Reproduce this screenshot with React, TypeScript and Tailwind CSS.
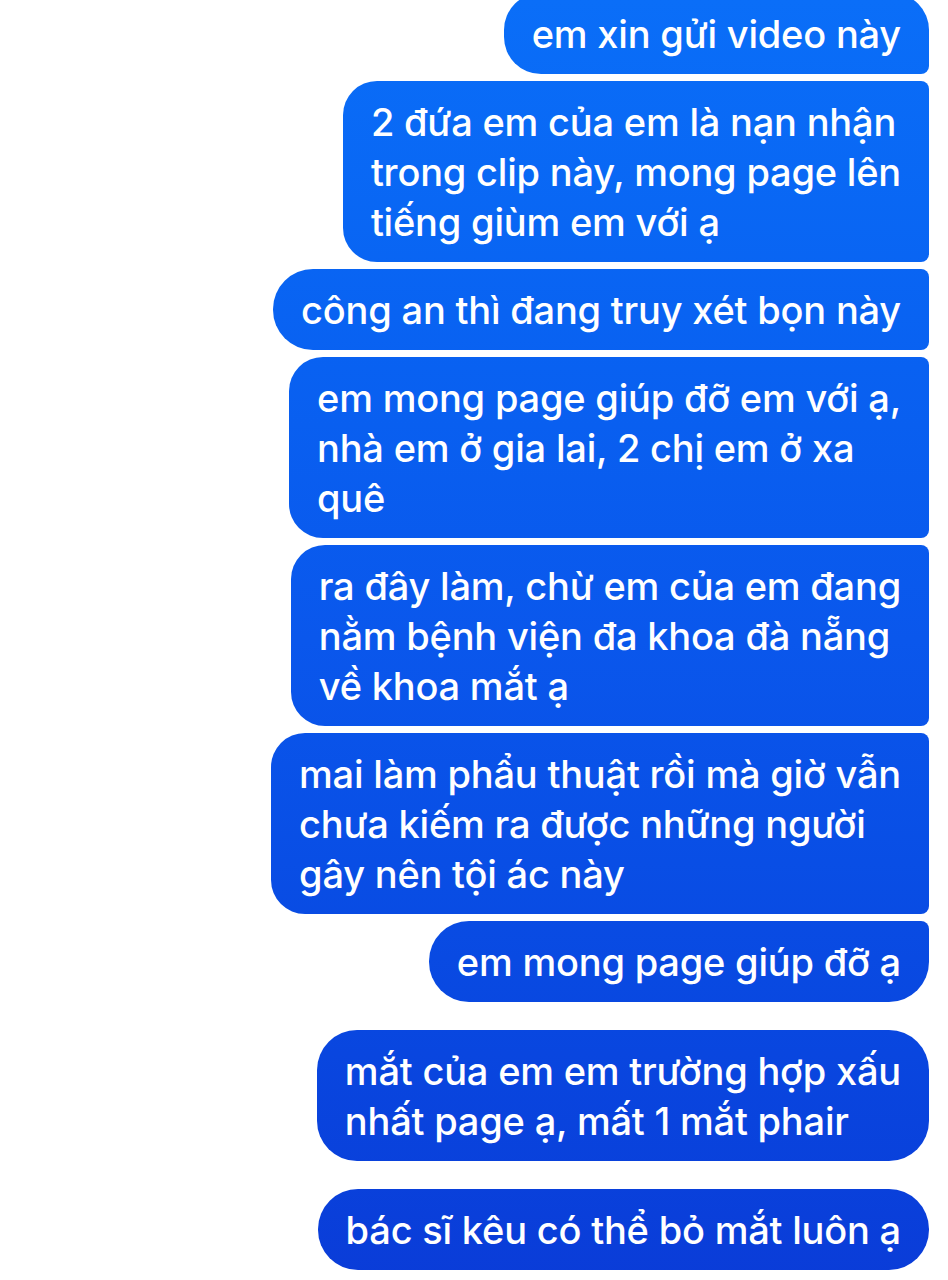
const font = { fontFamily: "Inter, 'Noto Sans', 'Liberation Sans', sans-serif" };

type Msg = {
  lines: string[];
  shape: string;
  gap: string;
};

const messages: Msg[] = [
  { lines: ["em xin gửi video này"], shape: "rounded-l-[37px] rounded-tr-[37px] rounded-br-[8px]", gap: "-mt-[7px]" },
  {
    lines: ["2 đứa em của em là nạn nhận", "trong clip này, mong page lên", "tiếng giùm em với ạ"],
    shape: "rounded-l-[34px] rounded-r-[8px]",
    gap: "mt-[7px]",
  },
  { lines: ["công an thì đang truy xét bọn này"], shape: "rounded-l-[40px] rounded-r-[8px]", gap: "mt-[7px]" },
  {
    lines: ["em mong page giúp đỡ em với ạ,", "nhà em ở gia lai, 2 chị em ở xa", "quê"],
    shape: "rounded-l-[34px] rounded-r-[8px]",
    gap: "mt-[7px]",
  },
  {
    lines: ["ra đây làm, chừ em của em đang", "nằm bệnh viện đa khoa đà nẵng", "về khoa mắt ạ"],
    shape: "rounded-l-[34px] rounded-r-[8px]",
    gap: "mt-[7px]",
  },
  {
    lines: ["mai làm phẩu thuật rồi mà giờ vẫn", "chưa kiếm ra được những người", "gây nên tội ác này"],
    shape: "rounded-l-[34px] rounded-r-[8px]",
    gap: "mt-[7px]",
  },
  { lines: ["em mong page giúp đỡ ạ"], shape: "rounded-l-[40px] rounded-tr-[8px] rounded-br-[40px]", gap: "mt-[7px]" },
  {
    lines: ["mắt của em em trường hợp xấu", "nhất page ạ, mất 1 mắt phair"],
    shape: "rounded-[40px]",
    gap: "mt-[28px]",
  },
  { lines: ["bác sĩ kêu có thể bỏ mắt luôn ạ"], shape: "rounded-[40px]", gap: "mt-[28px]" },
];

function Bubble({ msg }: { msg: Msg }) {
  return (
    <div
      className={`${msg.gap} ${msg.shape} bg-gradient-to-b from-[#0a6ef8] via-[#0a57ec] to-[#0a3cd8] bg-fixed px-[28px] py-[15.5px] text-[38px] leading-[50px] font-medium tracking-[-0.2px] text-white`}
    >
      {msg.lines.map((l, i) => (
        <div key={i} className="whitespace-nowrap">
          {l}
        </div>
      ))}
    </div>
  );
}

export default function App() {
  return (
    <div className="min-h-[1280px] w-[948px] overflow-hidden bg-white" style={font}>
      <div className="flex flex-col items-end pr-[19px]">
        {messages.map((m, i) => (
          <Bubble key={i} msg={m} />
        ))}
      </div>
    </div>
  );
}
